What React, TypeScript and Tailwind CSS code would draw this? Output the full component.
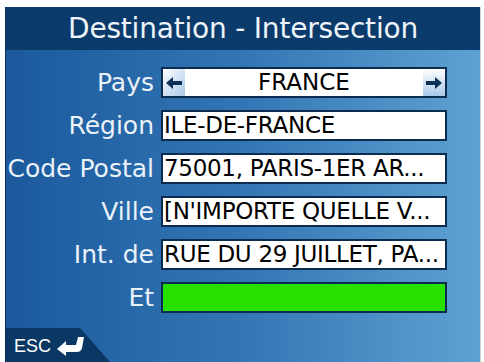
import React from "react";

const font = { fontFamily: '"DejaVu Sans", Verdana, sans-serif' };

const rows = [
  { label: "Région", value: "ILE-DE-FRANCE" },
  { label: "Code Postal", value: "75001, PARIS-1ER AR..." },
  { label: "Ville", value: "[N'IMPORTE QUELLE V..." },
  { label: "Int. de", value: "RUE DU 29 JUILLET, PA..." },
];

const ArrowLeft = () => (
  <svg width="16" height="12" viewBox="0 0 16 12">
    <path d="M0 6 L7 0 L7 4 L16 4 L16 8 L7 8 L7 12 Z" fill="#0c2f55" />
  </svg>
);

const ArrowRight = () => (
  <svg width="16" height="12" viewBox="0 0 16 12">
    <path d="M16 6 L9 0 L9 4 L0 4 L0 8 L9 8 L9 12 Z" fill="#0c2f55" />
  </svg>
);

const ReturnIcon = () => (
  <svg width="28" height="20" viewBox="0 0 28 20">
    <path d="M0 13 L9 5 L9 9 L19 9 L21 1 L27 1 L25 12 Q24 16 20 16 L9 16 L9 20 Z" fill="#ffffff" />
  </svg>
);

export default function App() {
  return (
    <div className="w-[484px] h-[362px] bg-white pt-[7px] pl-[5px] overflow-hidden" style={font}>
      <div className="w-[476px] h-[355px] flex flex-col border-l border-[#0a2d55] border-r border-r-[#c8d4e0]">
        <div className="h-[43px] bg-[#0b3b6b] flex items-center justify-center text-[28px] tracking-[-0.2px] text-[#eef4fa]">
          Destination - Intersection
        </div>
        <div className="flex-1 flex flex-col bg-gradient-to-r from-[#1b599c] via-[#3276b5] to-[#5ea2d2]">
          <div className="flex flex-col gap-[12px] pt-[17px]">
            <div className="flex items-center">
              <div className="w-[149px] text-right text-[25px] leading-none text-[#eaf1f8] pr-[1px]">Pays</div>
              <div className="ml-[6px] w-[286px] h-[31px] bg-white border-2 border-[#0c2c4f] flex items-stretch">
                <div className="w-[22px] flex items-center justify-center bg-gradient-to-br from-white to-[#a9c8e8]">
                  <ArrowLeft />
                </div>
                <div className="flex-1 flex items-center justify-center text-[23px] leading-none text-black">FRANCE</div>
                <div className="w-[22px] flex items-center justify-center bg-gradient-to-b from-white to-[#a9c8e8]">
                  <ArrowRight />
                </div>
              </div>
            </div>
            {rows.map((r) => (
              <div key={r.label} className="flex items-center">
                <div className="w-[149px] text-right text-[25px] leading-none text-[#eaf1f8] pr-[1px] whitespace-nowrap">
                  {r.label}
                </div>
                <div className="ml-[6px] w-[286px] h-[31px] bg-white border-2 border-[#0c2c4f] flex items-center pl-[1px] text-[23px] tracking-[-0.3px] leading-none text-black whitespace-nowrap overflow-hidden">
                  {r.value}
                </div>
              </div>
            ))}
            <div className="flex items-center">
              <div className="w-[149px] text-right text-[25px] leading-none text-[#eaf1f8] pr-[1px]">Et</div>
              <div className="ml-[6px] w-[286px] h-[31px] bg-[#27e000] border-2 border-[#0c2c4f]" />
            </div>
          </div>
          <div className="mt-auto w-[104px] h-[34px] bg-[#0b3764] [clip-path:polygon(0_0,74px_0,104px_34px,0_34px)] flex items-center gap-[6px] pl-[8px] pt-[2px]">
            <span className="text-[18px] text-white" style={{ fontFamily: '"Liberation Sans", Arial, sans-serif' }}>ESC</span>
            <ReturnIcon />
          </div>
        </div>
      </div>
    </div>
  );
}
